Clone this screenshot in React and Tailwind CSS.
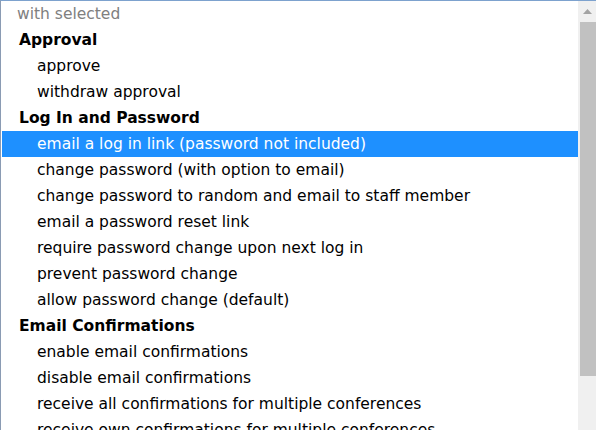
import React from 'react';

const groups = [
  {
    label: 'Approval',
    options: ['approve', 'withdraw approval'],
  },
  {
    label: 'Log In and Password',
    options: [
      'email a log in link (password not included)',
      'change password (with option to email)',
      'change password to random and email to staff member',
      'email a password reset link',
      'require password change upon next log in',
      'prevent password change',
      'allow password change (default)',
    ],
  },
  {
    label: 'Email Confirmations',
    options: [
      'enable email confirmations',
      'disable email confirmations',
      'receive all confirmations for multiple conferences',
      'receive own confirmations for multiple conferences',
    ],
  },
];

const selected = 'email a log in link (password not included)';

export default function App() {
  return (
    <div
      className="h-[430px] w-[596px] overflow-hidden bg-white flex border-t border-l border-t-[#7da2ce] border-l-[#8a9bb3] text-[15.5px] leading-[26px]"
      style={{ fontFamily: '"DejaVu Sans", Verdana, sans-serif' }}
    >
      {/* options list */}
      <div className="flex-1 pl-px min-w-0">
        <div className="h-[26px] pl-[15px] text-[#808080] whitespace-nowrap">with selected</div>
        {groups.map((g) => (
          <div key={g.label}>
            <div className="h-[26px] pl-[17px] font-bold text-black whitespace-nowrap">{g.label}</div>
            {g.options.map((o) => (
              <div
                key={o}
                className={
                  o === selected
                    ? 'h-[26px] pl-[35px] bg-[#1e90ff] text-white whitespace-nowrap'
                    : 'h-[26px] pl-[35px] text-black whitespace-nowrap'
                }
              >
                {o}
              </div>
            ))}
          </div>
        ))}
      </div>

      {/* scrollbar */}
      <div className="w-[18px] shrink-0 bg-[#f0f0f0] flex flex-col">
        <div className="h-[21px] flex items-center justify-center">
          <svg width="9" height="6" viewBox="0 0 9 6">
            <path d="M4.5 0 L9 5 H0 Z" fill="#a3a3a3" />
          </svg>
        </div>
        <div className="ml-[2px] h-[354px] bg-[#c1c1c1]" />
      </div>
    </div>
  );
}
